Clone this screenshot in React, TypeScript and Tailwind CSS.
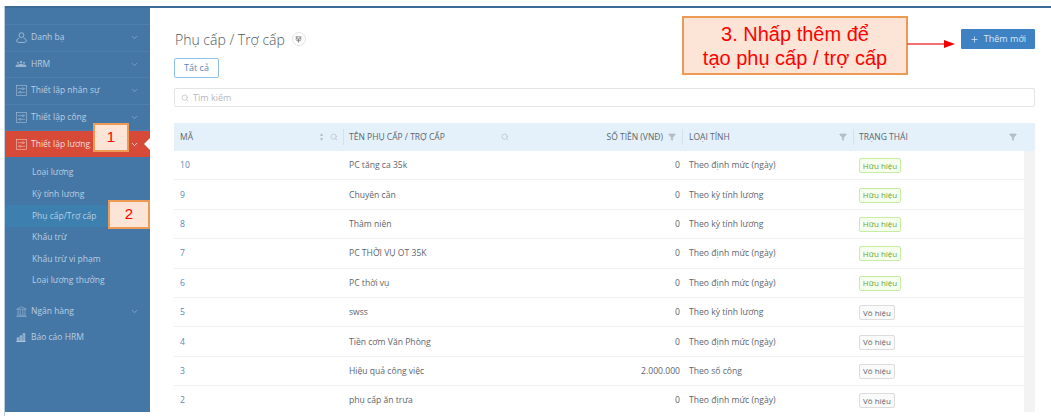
import { ChevronDown, Search, Plus, Filter } from 'lucide-react';

function UserIcon() {
  return (
    <svg viewBox="0 0 12 12" className="w-[11px] h-[11px]" fill="none" stroke="currentColor" strokeWidth="0.8">
      <circle cx="6" cy="3.4" r="2.6" />
      <path d="M3.6 6.6 C1.6 7.2 0.8 8.4 0.8 9.6 C0.8 11 2 11.4 3 11.4 H9 C10 11.4 11.2 11 11.2 9.6 C11.2 8.4 10.4 7.2 8.4 6.6" />
    </svg>
  );
}

function TeamIcon() {
  return (
    <svg viewBox="0 0 14 10" className="w-[12px] h-[9px] opacity-70" fill="currentColor">
      <circle cx="7" cy="2" r="1.3" />
      <circle cx="3.4" cy="3" r="1.1" />
      <circle cx="10.6" cy="3" r="1.1" />
      <path d="M0.5 8 C0.8 5.4 2 5 3.4 5 C4.8 5 6 5.4 6.2 8 Z M7.8 8 C8 5.4 9.2 5 10.6 5 C12 5 13.2 5.4 13.5 8 Z" />
      <rect x="4.5" y="4" width="5" height="4" rx="1.5" />
    </svg>
  );
}

function SettingsIcon({ knob = '#4577a6' }: { knob?: string }) {
  return (
    <svg viewBox="0 0 12 12" className="w-[11px] h-[11px] opacity-80" fill="none" stroke="currentColor" strokeWidth="0.7">
      <rect x="0.5" y="0.5" width="11" height="11" />
      <path d="M2 4 H10 M2 8 H10" />
      <circle cx="7.5" cy="4" r="1" fill={knob} />
      <circle cx="4.5" cy="8" r="1" fill={knob} />
    </svg>
  );
}

function BankIcon() {
  return (
    <svg viewBox="0 0 12 12" className="w-[11px] h-[11px] opacity-80" fill="none" stroke="currentColor" strokeWidth="0.7">
      <path d="M0.8 3.6 L6 0.8 L11.2 3.6 Z" />
      <path d="M2.2 4.6 V9.4 M4.6 4.6 V9.4 M7.4 4.6 V9.4 M9.8 4.6 V9.4" />
      <path d="M1 10 H11 M0.4 11.4 H11.6" />
    </svg>
  );
}

function ChartIcon() {
  return (
    <svg viewBox="0 0 12 11" className="w-[10px] h-[9px]" fill="none" stroke="currentColor" strokeWidth="1">
      <path d="M0.4 10.4 H11.6" />
      <rect x="1.4" y="6" width="2" height="4" />
      <rect x="5" y="3.6" width="2" height="6.4" />
      <rect x="8.6" y="1" width="2" height="9" />
    </svg>
  );
}

function TitleIcon() {
  return (
    <svg viewBox="0 0 8 8" className="w-[7px] h-[7px]" fill="none" stroke="#666" strokeWidth="0.8">
      <path d="M0.5 1 H7.5 M0.5 3.4 H7.5 M2 1 V3.4 M6 1 V3.4 M4 3.4 V7.6 M1.5 5.4 H6.5" />
    </svg>
  );
}

const menuTop = [
  { label: 'Danh bạ', icon: <UserIcon /> },
  { label: 'HRM', icon: <TeamIcon /> },
  { label: 'Thiết lập nhân sự', icon: <SettingsIcon /> },
  { label: 'Thiết lập công', icon: <SettingsIcon /> },
];

const subMenu = ['Loại lương', 'Kỳ tính lương', 'Phụ cấp/Trợ cấp', 'Khấu trừ', 'Khấu trừ vi phạm', 'Loại lương thưởng'];

const rows = [
  { id: '10', name: 'PC tăng ca 35k', money: '0', type: 'Theo định mức (ngày)', active: true },
  { id: '9', name: 'Chuyên cần', money: '0', type: 'Theo kỳ tính lương', active: true },
  { id: '8', name: 'Thâm niên', money: '0', type: 'Theo kỳ tính lương', active: true },
  { id: '7', name: 'PC THỜI VỤ OT 35K', money: '0', type: 'Theo định mức (ngày)', active: true },
  { id: '6', name: 'PC thời vụ', money: '0', type: 'Theo định mức (ngày)', active: true },
  { id: '5', name: 'swss', money: '0', type: 'Theo kỳ tính lương', active: false },
  { id: '4', name: 'Tiền cơm Văn Phòng', money: '0', type: 'Theo định mức (ngày)', active: false },
  { id: '3', name: 'Hiệu quả công việc', money: '2.000.000', type: 'Theo số công', active: false },
  { id: '2', name: 'phụ cấp ăn trưa', money: '0', type: 'Theo định mức (ngày)', active: false },
];

function MenuRow({ label, icon }: { label: string; icon: React.ReactNode }) {
  return (
    <div className="flex h-[26.5px] items-center border-b border-[#4f80ad] pl-[10px] pr-[11px] text-[#b9cee2]">
      <span className="flex w-[12px] justify-center">{icon}</span>
      <span className="ml-[4px] flex-1">{label}</span>
      <ChevronDown size={9} strokeWidth={1.2} />
    </div>
  );
}

function Sidebar() {
  return (
    <aside className="flex h-[404px] w-[145px] shrink-0 flex-col bg-[#4577a6] text-[8.5px]">
      <div className="h-[17px] shrink-0 border-b border-[#4f80ad]" />
      {menuTop.map((m) => (
        <MenuRow key={m.label} label={m.label} icon={m.icon} />
      ))}
      <div className="relative flex h-[26px] items-center bg-[#d84a38] pl-[10px] pr-[11px] text-[#f6dcd8]">
        <span className="flex w-[12px] justify-center"><SettingsIcon knob="#d84a38" /></span>
        <span className="ml-[4px] flex-1">Thiết lập lương</span>
        <ChevronDown size={9} strokeWidth={2} className="text-white" />
        <span className="absolute right-0 top-[7px] h-0 w-0 border-y-[6px] border-r-[6px] border-y-transparent border-r-white" />
      </div>
      <div className="flex flex-col pt-[5px] pb-[7px]">
        {subMenu.map((s) => (
          <div
            key={s}
            className={'flex h-[21.6px] items-center pl-[27px] text-[#b9cee2] ' + (s === 'Phụ cấp/Trợ cấp' ? 'bg-[#3d7fae]' : '')}
          >
            {s}
          </div>
        ))}
      </div>
      <div className="flex h-[26px] items-center pl-[10px] pr-[11px] text-[#b9cee2]">
        <span className="flex w-[12px] justify-center"><BankIcon /></span>
        <span className="ml-[4px] flex-1">Ngân hàng</span>
        <ChevronDown size={9} strokeWidth={1.2} />
      </div>
      <div className="flex h-[25px] items-center pl-[10px] text-[#b9cee2]">
        <span className="flex w-[12px] justify-center"><ChartIcon /></span>
        <span className="ml-[4px]">Báo cáo HRM</span>
      </div>
    </aside>
  );
}

function Funnel() {
  return <Filter size={8} fill="#b5bcc2" stroke="#b5bcc2" />;
}

function Table() {
  return (
    <div className="mt-[16px] text-[#5c656d]">
      <div className="flex h-[28px] items-center bg-[#e4f1fb] text-[8.5px]">
        <div className="flex h-full w-[170px] items-center pl-[6px]">
          <span className="flex-1">MÃ</span>
          <span className="mr-[6px] text-[5px] leading-[5px] text-[#b5bcc2]">▲<br />▼</span>
          <Search size={8} className="mr-[5px] text-[#b5bcc2]" />
          <span className="h-[16px] border-r border-[#d5e2ec]" />
        </div>
        <div className="flex h-full w-[170px] items-center pl-[5px]">
          <span className="flex-1">TÊN PHỤ CẤP / TRỢ CẤP</span>
          <Search size={8} className="mr-[5px] text-[#b5bcc2]" />
        </div>
        <div className="flex h-full w-[170px] items-center justify-end pr-[1px]">
          <span className="mr-[5px]">SỐ TIỀN (VNĐ)</span>
          <Funnel />
          <span className="ml-[6px] h-[16px] border-r border-[#d5e2ec]" />
        </div>
        <div className="flex h-full w-[170px] items-center pl-[5px]">
          <span className="flex-1">LOẠI TÍNH</span>
          <Funnel />
          <span className="ml-[6px] h-[16px] border-r border-[#d5e2ec]" />
        </div>
        <div className="flex h-full flex-1 items-center pl-[5px] pr-[18px]">
          <span className="flex-1">TRẠNG THÁI</span>
          <Funnel />
        </div>
      </div>
      <div className="flex">
        <div className="w-[850px]">
          {rows.map((r) => (
            <div key={r.id} className="flex h-[29.4px] items-center border-b border-[#eef0f2] pt-[1px] text-[8.6px]">
              <div className="w-[170px] pl-[6px] text-[#5b87b5]">{r.id}</div>
              <div className="w-[170px] pl-[5px]">{r.name}</div>
              <div className="w-[166px] text-right">{r.money}</div>
              <div className="w-[173px] pl-[9px]">{r.type}</div>
              <div className="pl-[6px]">
                {r.active ? (
                  <span className="flex h-[15px] w-[42px] items-center justify-center rounded-[2px] border border-[#c5eea0] bg-[#f6ffed] text-[8px] text-[#69a83c]">Hữu hiệu</span>
                ) : (
                  <span className="flex h-[15px] w-[36px] items-center justify-center rounded-[2px] border border-[#dcdcdc] bg-[#fafafa] text-[8px] text-[#666]">Vô hiệu</span>
                )}
              </div>
            </div>
          ))}
        </div>
        <div className="flex-1 bg-[#f3f3f3]" />
      </div>
    </div>
  );
}

function Main() {
  return (
    <main className="h-[404px] flex-1 overflow-hidden px-[24px] pt-[21px] pr-[16px]">
      <div className="flex h-[20px] items-center justify-between">
        <div className="ml-[1px] flex items-center">
          <h1 className="text-[14px] font-light text-[#4f5962]">Phụ cấp / Trợ cấp</h1>
          <span className="ml-[7px] flex h-[14px] w-[14px] items-center justify-center rounded-full border border-[#dfe2e5]">
            <TitleIcon />
          </span>
        </div>
        <button className="flex h-[20px] w-[74px] items-center justify-center gap-[5px] rounded-[1px] bg-[#3f82c4] text-[9px] text-[#dbe8f5]">
          <Plus size={9} strokeWidth={2} />
          Thêm mới
        </button>
      </div>
      <button className="mt-[9px] flex h-[20px] w-[45px] items-center justify-center rounded-[2px] border border-[#8fc0e8] text-[9px] text-[#5b87b5]">Tất cả</button>
      <div className="mt-[10px] flex h-[19px] items-center rounded-[2px] border border-[#e2e4e6] pl-[6px] text-[9px] text-[#b5b9bd]">
        <Search size={8} className="mr-[4px]" />
        Tìm kiếm
      </div>
      <Table />
    </main>
  );
}

export default function App() {
  return (
    <div className="relative h-[416px] w-[1051px] overflow-hidden bg-white font-['Open_Sans',sans-serif]">
      <div className="h-[6px]" />
      <div className="ml-[4px] flex h-[410px] flex-col border-l border-[#b9cfe0]">
        <div className="h-[2px] shrink-0 bg-[#3a6a96]" />
        <div className="flex flex-1">
          <Sidebar />
          <Main />
        </div>
      </div>

      <div className="absolute left-[93px] top-[123px] flex h-[29px] w-[36px] items-center justify-center border-2 border-[#ed9a55] bg-[#fce4d6] font-['Liberation_Sans',sans-serif] text-[15px] text-[#f00]">1</div>
      <div className="absolute left-[108px] top-[200px] flex h-[29px] w-[42px] items-center justify-center border-2 border-[#ed9a55] bg-[#fce4d6] font-['Liberation_Sans',sans-serif] text-[15px] text-[#f00]">2</div>
      <div className="absolute left-[682px] top-[16px] flex h-[59px] w-[226px] flex-col items-center justify-center border-2 border-[#ed9a55] bg-[#fce4d6] font-['Liberation_Sans',sans-serif] text-[20px] leading-[24px] text-[#f00]">
        <span>3. Nhấp thêm để</span>
        <span>tạo phụ cấp / trợ cấp</span>
      </div>
      <svg className="absolute left-[907px] top-[38px]" width="50" height="12" viewBox="0 0 50 12">
        <path d="M0 6 H38" stroke="#f04040" strokeWidth="1.5" />
        <path d="M37 2 L48 6 L37 10 Z" fill="#f00000" />
      </svg>
    </div>
  );
}
